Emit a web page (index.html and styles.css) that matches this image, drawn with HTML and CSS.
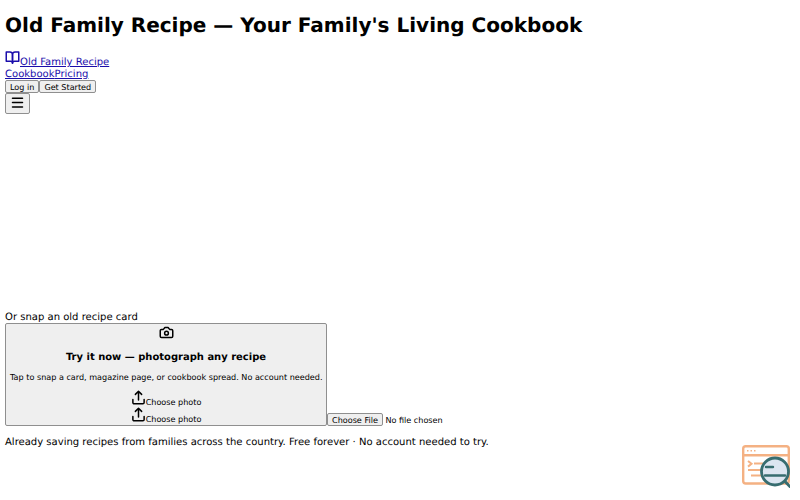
FILE: index.html
```html
<!DOCTYPE html>
<html lang="en">
<head>
    <meta charset="UTF-8">
    <meta name="viewport" content="width=device-width, initial-scale=1.0">
    <title>Old Family Recipe</title>
    <link rel="stylesheet" href="styles.css">
</head>
<body>
    <h1>Old Family Recipe — Your Family's Living Cookbook</h1>

    <header>
        <div class="brand">
            <a href="#"><svg class="icon" viewBox="0 0 24 24"><path d="M2 3h6a4 4 0 0 1 4 4v14a3 3 0 0 0-3-3H2z"/><path d="M22 3h-6a4 4 0 0 0-4 4v14a3 3 0 0 1 3-3h7z"/></svg><span>Old Family Recipe</span></a>
        </div>
        <nav class="links"><a href="#">Cookbook</a><a href="#">Pricing</a></nav>
        <div class="actions"><button type="button">Log in</button><button type="button">Get Started</button></div>
        <button type="button" class="menu" aria-label="Menu"><svg class="icon" viewBox="0 0 24 24"><path d="M4 5h16M4 12h16M4 19h16"/></svg></button>
    </header>

    <main>
        <section class="hero"></section>

        <section class="snap">
            <div class="snap-label">Or snap an old recipe card</div>
            <div class="upload">
                <button type="button" class="dropzone">
                    <svg class="icon" viewBox="0 0 24 24"><path d="M14.5 4h-5L7 7H4a2 2 0 0 0-2 2v9a2 2 0 0 0 2 2h16a2 2 0 0 0 2-2V9a2 2 0 0 0-2-2h-3z"/><circle cx="12" cy="13" r="3"/></svg>
                    <h3>Try it now — photograph any recipe</h3>
                    <p>Tap to snap a card, magazine page, or cookbook spread. No account needed.</p>
                    <div class="choose"><svg class="icon" viewBox="0 0 24 24"><path d="M21 15v5a2 2 0 0 1-2 2H5a2 2 0 0 1-2-2v-5M17 7l-5-5-5 5M12 2v14"/></svg><span>Choose photo</span></div>
                    <div class="choose"><svg class="icon" viewBox="0 0 24 24"><path d="M21 15v5a2 2 0 0 1-2 2H5a2 2 0 0 1-2-2v-5M17 7l-5-5-5 5M12 2v14"/></svg><span>Choose photo</span></div>
                </button><input type="file">
            </div>
            <p class="note">Already saving recipes from families across the country. Free forever · No account needed to try.</p>
        </section>
    </main>

    <!-- floating inspector badge -->
    <svg class="inspect" viewBox="0 0 48 43" fill="none">
        <g stroke="#f4b183" stroke-width="2.4">
            <rect x="1.2" y="1.2" width="45.6" height="37.3" rx="2.5"/>
            <path d="M1 10.3h46"/>
            <path d="M5 5.7h1.5M8.5 5.7H10M12 5.7h1.5" stroke-width="1.5"/>
            <path d="M6 16l3.5 2.8L6 21.6M12 18.6h9M6 25h14M9 30.5h12" stroke-width="2"/>
        </g>
        <circle cx="33" cy="26.5" r="13.5" fill="#dce6f1" stroke="#376d70" stroke-width="2.8"/>
        <path d="M24 22h7M23 30.5h20" stroke="#376d70" stroke-width="2.4" stroke-linecap="round"/>
        <path d="M43 36.5l6 6" stroke="#376d70" stroke-width="3"/>
    </svg>
</body>
</html>
```
FILE: styles.css
```css
body {
    margin: 0 5px;
    font-family: "DejaVu Sans", sans-serif;
    font-size: 10.04px;
    line-height: 12px;
    color: #000;
    background: #fff;
    text-rendering: geometricPrecision;
}

h1 {
    margin: 0;
    padding: 13px 0;
    font-size: 20.02px;
    line-height: 24px;
}

a {
    color: #1a0dab;
}

.icon {
    width: 15px;
    height: 15px;
    fill: none;
    stroke: currentColor;
    stroke-width: 2.4;
    stroke-linecap: round;
    stroke-linejoin: round;
}

.brand {
    height: 18px;
}

.links,
.actions {
    display: flex;
}

.links {
    height: 12px;
    line-height: 14px;
}

button,
input,
input::file-selector-button {
    font-family: inherit;
    font-size: 8.09px;
    line-height: 10px;
    color: #000;
    text-rendering: geometricPrecision;
}

button,
input::file-selector-button {
    margin: 0;
    padding: 0.5px 4px;
    background: #efefef;
    border: 1px solid #8f8f8f;
    border-radius: 2px;
}

.menu {
    display: block;
    width: 25px;
    height: 21px;
}

.hero {
    height: 198px;
}

.snap-label {
    height: 11px;
}

.upload {
    display: flex;
    align-items: flex-end;
}

.dropzone {
    width: 322px;
    height: 103px;
    text-align: center;
    white-space: nowrap;
}

.dropzone h3 {
    margin: 10px 0;
    font-size: 9.98px;
    line-height: 12px;
}

.dropzone p {
    margin: -2px 0 8px;
}

.choose {
    height: 16.9px;
}

input {
    padding: 0;
}

input::file-selector-button {
    margin-right: 2.5px;
}

.note {
    margin: 10px 0;
    padding-top: 1px;
}

.inspect {
    position: fixed;
    right: 10px;
    bottom: 12px;
    width: 48px;
    height: 43px;
}
```
